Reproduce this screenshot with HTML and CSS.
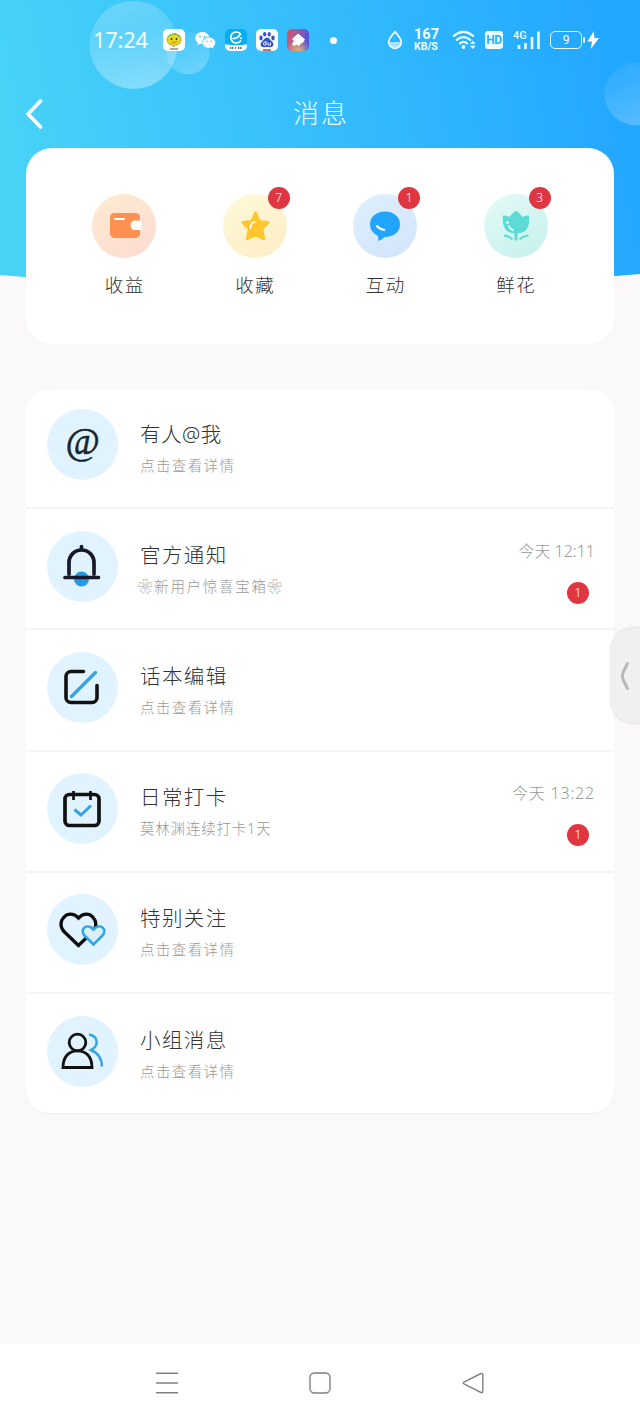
FILE: index.html
```html
<!DOCTYPE html>
<html lang="zh-CN">
<head>
<meta charset="utf-8">
<title>消息</title>
<link rel="stylesheet" href="styles.css">
</head>
<body>
<div class="screen">
  <svg class="backdrop" width="640" height="292" viewBox="0 0 640 292" aria-hidden="true">
    <defs>
      <linearGradient id="sky" gradientUnits="userSpaceOnUse" x1="0" y1="150" x2="610" y2="30"><stop offset="0" stop-color="#48d3f6"/><stop offset=".45" stop-color="#37c0fc"/><stop offset="1" stop-color="#22a7ff"/></linearGradient>
      <linearGradient id="bub" x1=".4" y1="0" x2=".6" y2="1"><stop offset="0" stop-color="#fff" stop-opacity=".22"/><stop offset=".35" stop-color="#fff" stop-opacity=".16"/><stop offset="1" stop-color="#fff" stop-opacity=".36"/></linearGradient>
      <linearGradient id="bub2" x1=".2" y1="0" x2=".7" y2="1"><stop offset="0" stop-color="#fff" stop-opacity=".04"/><stop offset="1" stop-color="#fff" stop-opacity=".25"/></linearGradient>
    </defs>
    <path d="M0 0H640V274Q320 304 0 275Z" fill="url(#sky)"/>
    <circle cx="188" cy="53" r="21.500" fill="url(#bub2)"/>
    <circle cx="133.500" cy="45" r="44" fill="url(#bub)"/>
    <circle cx="636" cy="94" r="31.500" fill="url(#bub2)"/>
  </svg>

  <header class="status">
    <span class="clock">17:24</span>
    <div class="apps">
      <svg width="22" height="22" viewBox="0 0 22 22"><rect width="22" height="22" rx="5" fill="#fff"/><path d="M4 10.500C3 4 19 3 18 10.500c0 4-3 5.500-6 5.500l-1.500 2-.5-2c-4 0-6-2-6-5.500Z" fill="#e8d51d" stroke="#9aa51b" stroke-width=".8"/><path d="M5 8l3-3M9.500 5l4-.5M14 6l3 2" stroke="#51b64b"/><circle cx="8.500" cy="10" r=".9" fill="#333"/><circle cx="13.500" cy="10" r=".9" fill="#333"/><path d="M9 13q2.500 1.500 5-.5" fill="none" stroke="#d77b20"/><path d="M7 20h8" stroke="#555"/></svg>
      <svg width="22" height="22" viewBox="0 0 22 22"><path d="M8.300 3C4.300 3 1.300 5.600 1.300 9c0 2 1 3.600 2.600 4.700L3.300 16l2.700-1.300q1.300.4 2.600.3C7.500 10 11 7.600 15.200 7.800 14.500 5 11.700 3 8.300 3Z" fill="#fff"/><path d="M15 8.500c-3.500 0-6.200 2.300-6.200 5.200s2.700 5.100 6.200 5.100q1.200 0 2.300-.4l2.400 1.200-.6-2c1.400-1 2.200-2.300 2.200-3.900 0-2.900-2.800-5.200-6.300-5.200Z" fill="#fff"/><g fill="#52c4f9"><circle cx="6" cy="7.500" r=".9"/><circle cx="10.500" cy="7.500" r=".9"/><circle cx="13" cy="12.300" r=".8"/><circle cx="17" cy="12.300" r=".8"/></g></svg>
      <svg width="22" height="22" viewBox="0 0 22 22"><rect width="22" height="22" rx="5" fill="#08aef3"/><path d="M0 15.300q11 1.800 22 0V17a5 5 0 0 1-5 5H5a5 5 0 0 1-5-5Z" fill="#fff"/><path d="M15.500 5A5.500 5.500 0 1 0 15.500 12M8 9.500q5 0 7-4" fill="none" stroke="#fff" stroke-width="1.700" stroke-linecap="round"/><circle cx="16" cy="9.200" r="1" fill="#fff"/><path d="M5 19h4m1 0h1m2 0h4" stroke="#5b7480" stroke-width="1.800" stroke-dasharray="1.200 .6"/></svg>
      <svg width="22" height="22" viewBox="0 0 22 22"><rect width="22" height="22" rx="5" fill="#fff"/><g fill="#3554c8"><ellipse cx="5" cy="9" rx="1.700" ry="2.400"/><ellipse cx="8.700" cy="5.200" rx="1.600" ry="2.300"/><ellipse cx="13.200" cy="5.200" rx="1.600" ry="2.300"/><ellipse cx="17" cy="9" rx="1.700" ry="2.400"/><path d="M11 8.500c2 0 3 2.300 4.500 3.500 4 3.500 1 6.500-1.500 6.200q-3-.4-6 0c-2.500.3-5.500-2.700-1.500-6.200C8 10.800 9 8.500 11 8.500Z"/></g><path d="M10 12v4H8.500a1.300 1.300 0 0 1 0-2.600H10m2 0v2.600h2.500v-2.600" fill="none" stroke="#fff" stroke-width=".9"/><path d="M7 21h8" stroke="#a34a55" stroke-width="1.500"/></svg>
      <svg width="22" height="22" viewBox="0 0 22 22"><defs><linearGradient id="app5" x1="0" y1="0" x2="1" y2=".3"><stop offset="0" stop-color="#dc505f"/><stop offset=".5" stop-color="#a05ba5"/><stop offset="1" stop-color="#4d57d8"/></linearGradient><radialGradient id="app5b" cx=".5" cy="1" r=".6"><stop offset="0" stop-color="#ecb66a"/><stop offset="1" stop-color="#ecb66a" stop-opacity="0"/></radialGradient></defs><rect width="22" height="22" rx="5" fill="url(#app5)"/><rect width="22" height="22" rx="5" fill="url(#app5b)"/><path d="M11 5l6.500 5.500-2 3-2.500 1-1 2-2-1.500-3 1.500-1.500-1.500 2-3L5.500 10Z" fill="#fff" stroke="#fff" stroke-linejoin="round"/></svg>
    </div>
    <span class="dot"></span>
    <svg class="drop" width="16" height="20" viewBox="0 0 16 20"><path d="M8 1.800C5 5.500 1.700 8.500 1.700 12a6.300 6.300 0 0 0 12.600 0C14.300 8.500 11 5.500 8 1.800Z" fill="none" stroke="#f1ffff" stroke-width="1.700"/><path d="M2.500 12h11a5.500 5.500 0 0 1-11 0Z" fill="#fff" opacity=".6"/></svg>
    <span class="speed"><b>167</b><b class="unit">KB/S</b></span>
    <svg class="wifi" width="25" height="20" viewBox="0 0 25 20"><g fill="none" stroke="#edffff" stroke-width="2.200" stroke-linecap="round"><path d="M1.800 5.800Q11.500-2.200 21.200 5.800M4.800 9.800q6.700-5.500 13.400 0M8 13.300q3.500-2.800 7 0"/></g><circle cx="11.500" cy="17" r="1.900" fill="#edffff"/><path d="M18 14l2.800-3.500 2.800 3.500Zm0 1.800h5.600l-2.800 3.200Z" fill="#edffff"/></svg>
    <span class="hd">HD</span>
    <span class="signal"><i>4G</i><svg width="27" height="20" viewBox="0 0 27 20"><path d="M5 15v4M11.500 13v6M18 7v12M24.500 1.500V19" stroke="#edffff" stroke-width="2.600"/></svg></span>
    <span class="battery">9</span>
    <svg class="bolt" width="12" height="20" viewBox="0 0 12 20"><path d="M7 1L.3 11.500H5L3.800 19 12 8H7.300Z" fill="#fff"/></svg>
  </header>

  <div class="titlebar">
    <svg class="back" width="18" height="32" viewBox="0 0 18 32"><path d="M15.500 3L3 16 15.500 29" fill="none" stroke="#fff" stroke-width="3.600" stroke-linecap="round" stroke-linejoin="round"/></svg>
    <h1>消息</h1>
  </div>

  <section class="quick">
    <div class="tile">
      <span class="disc wallet"><svg width="32" height="28" viewBox="0 0 32 28"><rect x="0" y="1" width="30" height="25" rx="4.500" fill="#fe9152"/><path d="M5 7h9" stroke="#fff" stroke-width="2.200" stroke-linecap="round"/><path d="M31 8.500h-7a5 5 0 0 0 0 9.500h7q1-4.500 0-9.500Z" fill="#fff"/></svg></span>
      <span class="label">收益</span>
    </div>
    <div class="tile">
      <span class="disc star"><svg width="32" height="32" viewBox="0 0 32 32"><path d="M16.500 3l3.800 8.500 8.700 1-6.300 6.600 2 9.400-8.200-3.500-8.200 3.500 2-9.400L4 12.500l8.700-1Z" fill="#ffc72d" stroke="#ffc72d" stroke-width="3" stroke-linejoin="round"/><path d="M11.500 18q0-5 4-6" fill="none" stroke="#fff" stroke-width="1.800" stroke-linecap="round"/></svg><em class="badge">7</em></span>
      <span class="label">收藏</span>
    </div>
    <div class="tile">
      <span class="disc talk"><svg width="32" height="32" viewBox="0 0 32 32"><path d="M16 1.500C7 1.500 1 7 1 14.500c0 5 3 9 8 11.500L9.500 31q4-1.500 6-4C25 27 31 22 31 14.500 31 7 25 1.500 16 1.500Z" fill="#22a5ff"/><path d="M7.500 15.500q3.500 4 8.500 4.500" fill="none" stroke="#fff" stroke-width="2.200"/></svg><em class="badge">1</em></span>
      <span class="label">互动</span>
    </div>
    <div class="tile">
      <span class="disc flower"><svg width="32" height="32" viewBox="0 0 32 32"><path d="M3 5.500q3.500-.5 6.500 1.500Q12 3 16 .8q4 2.200 6.500 6.200 3-2 6.500-1.500C30 15 27.500 23.500 16 23.500S2 15 3 5.500Z" fill="#5cdcd5"/><circle cx="7.500" cy="12.500" r="1.200" fill="#fff"/><path d="M8.500 15.500q1.500 3.500 5 5" fill="none" stroke="#fff" stroke-width="1.600"/><path d="M16 23v7.500" stroke="#5cdcd5" stroke-width="3"/><path d="M4 25.500q5 .3 8.500 4M28.500 25.500q-5.500 .3-9 4" fill="none" stroke="#5cdcd5" stroke-width="1.900"/></svg><em class="badge">3</em></span>
      <span class="label">鲜花</span>
    </div>
  </section>

  <main class="list">
    <div class="row">
      <span class="avatar"><span class="at">@</span></span>
      <div class="text"><h2 class="mention">有人@我</h2><p>点击查看详情</p></div>
    </div>
    <div class="row">
      <span class="avatar"><svg width="40" height="46" viewBox="0 0 40 46"><circle cx="19.500" cy="36" r="7.500" fill="#249ae4"/><path d="M7 31V19.500a12.500 12.500 0 0 1 25 0V31M19.500 7V3.500M3 34.500h33.500" fill="none" stroke="#19192c" stroke-width="3.700" stroke-linecap="round"/></svg></span>
      <div class="text"><h2>官方通知</h2><p class="promo">❀新用户惊喜宝箱❀</p></div>
      <div class="meta"><time class="t1">今天 12:11</time><em class="badge">1</em></div>
    </div>
    <div class="row">
      <span class="avatar"><svg width="40" height="40" viewBox="0 0 40 40"><path d="M21.500 4.500H9A5 5 0 0 0 4 9.500V30.500a5 5 0 0 0 5 5H30a5 5 0 0 0 5-5V18.500" fill="none" stroke="#111" stroke-width="3.600" stroke-linecap="round"/><path d="M9.500 29.500L33.500 5.500" stroke="#35a4e2" stroke-width="3.400" stroke-linecap="round"/></svg></span>
      <div class="text"><h2>话本编辑</h2><p>点击查看详情</p></div>
    </div>
    <div class="row">
      <span class="avatar"><svg width="40" height="42" viewBox="0 0 40 42"><rect x="3" y="6.500" width="34" height="31" rx="4.500" fill="none" stroke="#111" stroke-width="3.700"/><path d="M11.500 3v9M28.500 3v9" stroke="#111" stroke-width="2.700"/><path d="M12.500 21.500l6.500 5.500 10-9.500" fill="none" stroke="#35a4e2" stroke-width="3"/></svg></span>
      <div class="text"><h2>日常打卡</h2><p class="streak">莫林渊连续打卡1天</p></div>
      <div class="meta"><time class="t2">今天 13:22</time><em class="badge">1</em></div>
    </div>
    <div class="row">
      <span class="avatar"><svg width="48" height="40" viewBox="0 0 48 40"><path d="M20.500 35.500L6 21.500C-3 12 10-3 20.500 8 31-3 43.500 12 35 21.500Z" fill="none" stroke="#0c0c0c" stroke-width="3.300"/><path d="M35.500 34.500l-9-9C21 19 29 12.500 35.500 19.500 42 12.500 50 19 44.500 25.500Z" fill="#d9effc" stroke="#35a4e2" stroke-width="2.600"/></svg></span>
      <div class="text"><h2>特别关注</h2><p>点击查看详情</p></div>
    </div>
    <div class="row">
      <span class="avatar"><svg width="42" height="38" viewBox="0 0 42 38"><g fill="none" stroke="#111" stroke-width="2.800"><circle cx="16.500" cy="10.500" r="8.300"/><path d="M2 35.500C2 25 7.500 18.800 16.500 18.800S31 25 31 35.500Z"/></g><path d="M28 2.500c9 1.500 10.500 11 2 15.500 7 3 11 8.500 11 16.500" fill="none" stroke="#35a4e2" stroke-width="2.500"/></svg></span>
      <div class="text"><h2>小组消息</h2><p>点击查看详情</p></div>
    </div>
  </main>

  <nav class="sysnav">
    <svg width="24" height="24" viewBox="0 0 24 24"><path d="M1.500 2.300h21M1.500 12h21M1.500 21.700h21" stroke="#808080" stroke-width="1.500" stroke-linecap="round"/></svg>
    <svg width="24" height="24" viewBox="0 0 24 24"><rect x="2" y="2" width="20" height="20" rx="4.500" fill="none" stroke="#808080" stroke-width="1.400"/></svg>
    <svg width="24" height="24" viewBox="0 0 24 24"><path d="M20 2.500L3 11q-1.500 1 0 2l17 8.500q1.800.5 1.800-1.500V4q0-2-1.800-1.500Z" fill="none" stroke="#808080" stroke-width="1.400"/></svg>
  </nav>

  <div class="edge"><svg width="10" height="30" viewBox="0 0 10 30"><path d="M7.500 2.500L3 11.500Q1.800 15 3 18.500l4.500 9" fill="none" stroke="#b9b9b9" stroke-width="3" stroke-linecap="round"/></svg></div>
</div>
</body>
</html>
```
FILE: styles.css
```css
* { box-sizing: border-box; margin: 0; padding: 0; }
body { background: #faf8f9; font-family: "Noto Sans", "Noto Sans CJK SC", sans-serif; font-weight: 300; }
svg { display: block; flex: none; }
em, i { font-style: normal; }
.screen { position: relative; width: 640px; height: 1422px; overflow: hidden; display: flex; flex-direction: column; }
.backdrop { position: absolute; left: 0; top: 0; }

.status { position: relative; height: 80px; flex: none; display: flex; align-items: center; padding-left: 93px; color: #f1ffff; }
.clock { width: 70px; font-family: "Noto Sans", sans-serif; font-size: 22px; line-height: 28px; font-weight: 400; letter-spacing: -.3px; white-space: nowrap; margin-top: -2px; }
.apps { display: flex; gap: 9px; }
.dot { width: 7px; height: 7px; border-radius: 50%; background: #fff; margin-left: 21px; }
.drop { margin-left: 50px; }
.speed { width: 27px; margin-left: 11px; display: flex; flex-direction: column; font-family: Roboto, sans-serif; font-size: 14.5px; line-height: 13px; white-space: nowrap; }
.speed b { font-weight: 700; }
.speed .unit { font-size: 10.5px; line-height: 11px; }
.wifi { margin-left: 11px; }
.hd { width: 18px; height: 18px; margin-left: 8px; border-radius: 3px; background: #edffff; color: #2aafff; font: 700 12px/18px Roboto, sans-serif; text-align: center; letter-spacing: -.5px; }
.signal { position: relative; margin-left: 11px; }
.signal i { position: absolute; left: -1px; top: 0; font: 500 11px/12px Roboto, sans-serif; }
.battery { position: relative; width: 32px; height: 18px; margin-left: 9px; border: 1.5px solid #e6faff; border-radius: 5px; font: 400 12px/16px Roboto, sans-serif; text-align: center; }
.battery::after { content: ""; position: absolute; right: -4px; top: 5px; width: 2px; height: 6px; border-radius: 1px; background: #e6faff; }
.bolt { margin-left: 5px; }

.titlebar { position: relative; height: 68px; flex: none; display: grid; grid-template-columns: 60px 1fr 60px; align-items: center; }
.back { margin-left: 25px; }
.titlebar h1 { color: #efffff; font-size: 26px; line-height: 36px; font-weight: 300; letter-spacing: 2px; text-align: center; padding-left: 2px; margin-top: -3px; }

.quick { position: relative; height: 196px; flex: none; margin: 0 26px; padding: 46px 33px 0; display: grid; grid-template-columns: repeat(4, 130.5px); background: #fff; border-radius: 26px; }
.tile { display: flex; flex-direction: column; align-items: center; gap: 13px; }
.disc { position: relative; width: 64px; height: 64px; border-radius: 50%; display: flex; align-items: center; justify-content: center; }
.wallet { background: linear-gradient(150deg, #feebd1, #fddbd3); padding-left: 3px; }
.star { background: linear-gradient(150deg, #fff9da, #fdedc4); }
.talk { background: linear-gradient(150deg, #def0fc, #d1e4fb); }
.flower { background: linear-gradient(150deg, #e4faf6, #c5f0ee); }
.label { color: #333; font-size: 18.5px; line-height: 28px; letter-spacing: 1.5px; padding-left: 1px; }
.badge { width: 22px; height: 22px; border-radius: 50%; background: #e03642; color: #fff; font-size: 12px; line-height: 22px; text-align: center; }
.disc .badge { position: absolute; left: 45px; top: -7px; }

.list { position: relative; width: 588px; height: 725px; flex: none; margin: 45px 26px 0; background: #fff; border-radius: 24px; border-bottom: 1px solid #f2eff0; display: grid; grid-template-rows: 120px repeat(4, 121.3px) 1fr; }
.row { display: flex; padding: 20px 19px 0 21px; border-bottom: 2px solid #f6f5f6; }
.row + .row { padding-top: 21.5px; }
.row:last-child { border-bottom: 0; }
.avatar { width: 71px; height: 71px; flex: none; border-radius: 50%; background: #e1f3fe; display: flex; align-items: center; justify-content: center; padding-right: 2px; }
.at { color: #152630; font: italic 400 37px/40px "Liberation Serif", serif; -webkit-text-stroke: .6px #152630; margin-top: -5px; padding-left: 2px; }
.text { flex: 1; padding: 10px 0 0 22px; white-space: nowrap; }
.text h2 { color: #333; font-size: 20.5px; line-height: 30px; font-weight: 300; letter-spacing: 1.4px; }
.row + .row .text { padding-top: 9px; }
.text .mention { letter-spacing: .5px; }
.text p { color: #999; font-size: 14.5px; line-height: 24px; letter-spacing: 1.4px; margin-top: 4px; }
.text .promo { margin-left: -2px; letter-spacing: 1.7px; }
.text .streak { letter-spacing: .8px; }
.meta { display: flex; flex-direction: column; align-items: flex-end; padding-top: 8px; }
.meta time { color: #999; font-size: 16px; line-height: 24px; white-space: nowrap; }
.meta .t2 { letter-spacing: .8px; }
.meta .badge { margin: 19px 6px 0 0; }

.sysnav { height: 78px; flex: none; margin-top: auto; padding: 0 155px; background: #fff; display: flex; align-items: center; justify-content: space-between; }
.edge { position: absolute; left: 611px; top: 628px; width: 50px; height: 95px; border-radius: 22px; background: #f0f0f0; box-shadow: 0 0 3px rgba(0, 0, 0, .18); display: flex; align-items: center; padding-left: 9px; }
```
